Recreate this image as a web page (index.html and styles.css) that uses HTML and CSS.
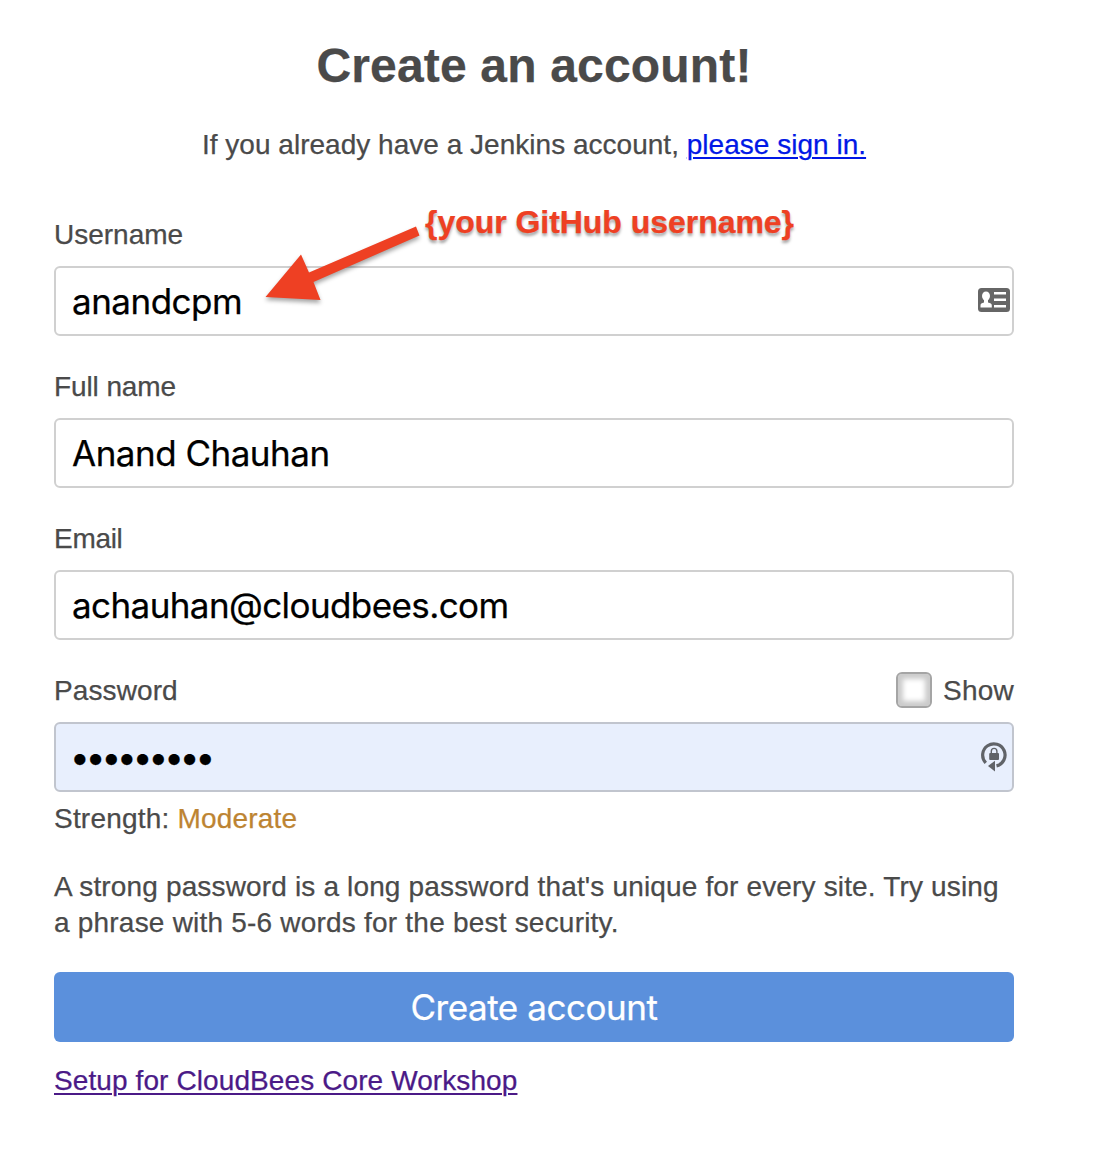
FILE: index.html
```html
<!DOCTYPE html>
<html lang="en">
<head>
<meta charset="utf-8">
<title>Create an account</title>
<link rel="stylesheet" href="styles.css">
</head>
<body>
<main class="signup">
  <h1 class="title">Create an account!</h1>
  <p class="intro">If you already have a Jenkins account, <a class="link" href="#">please sign in.</a></p>

  <div class="field">
    <div class="label"><span>Username</span></div>
    <div class="input"><span>anandcpm</span>
      <svg class="card-icon" width="32" height="24" viewBox="0 0 32 24"><rect width="32" height="24" rx="3.500" fill="#666"/><g fill="#fff"><ellipse cx="8" cy="8" rx="4" ry="4.500"/><path d="M6 11h4v3.500c2.500.5 3.800 1 3.800 3v2H2.500v-2c0-2 1.200-2.500 3.500-3z"/><path d="M16 4h12v2.500H16zM16 10.500h12V13H16zM16 17h12v2.500H16z"/></g></svg>
    </div>
  </div>
  <div class="field">
    <div class="label"><span class="full-name">Full name</span></div>
    <div class="input"><span>Anand Chauhan</span></div>
  </div>
  <div class="field">
    <div class="label"><span class="email-label">Email</span></div>
    <div class="input"><span class="email-value">achauhan@cloudbees.com</span></div>
  </div>
  <div class="field password">
    <div class="label"><span class="password-label">Password</span><div class="show"><i class="checkbox"></i><span class="show-label">Show</span></div></div>
    <div class="input filled"><span class="dots">•••••••••</span>
      <svg class="lock-icon" width="28" height="30" viewBox="0 0 28 30"><path d="M5.800 20.800A11.200 11.200 0 1 1 16.500 23.900" fill="none" stroke="#606368" stroke-width="3.200"/><path d="M8 24l7-5.300v10.800z" fill="#606368"/><rect x="9.200" y="11" width="9.800" height="7" rx="1" fill="#606368"/><path d="M11.300 11.500V9.200a2.800 2.800 0 0 1 5.600 0v2.300" fill="none" stroke="#606368" stroke-width="1.400"/></svg>
    </div>
  </div>
  <p class="strength">Strength: <b class="moderate">Moderate</b></p>
  <p class="hint"><span class="hint-first">A strong password is a long password that's unique for every site. Try using</span><br><span>a phrase with 5-6 words for the best security.</span></p>
  <div class="button">Create account</div>
  <p class="setup"><a class="visited" href="#">Setup for CloudBees Core Workshop</a></p>
</main>
<svg class="arrow" width="180" height="100" viewBox="250 210 180 100"><path d="M265.500 297L301 254.500 309 272.500 416 226.500 419.500 235.500 313.500 282 320.500 300z" fill="#ee4023"/></svg>
<span class="note">{your GitHub username}</span>
</body>
</html>
```
FILE: styles.css
```css
* { box-sizing: border-box; }
body {
  margin: 0;
  min-height: 1166px;
  position: relative;
  background: #fff;
  color: #4a4a4a;
  font: 28px/36px "Liberation Sans", Arial, sans-serif;
  -webkit-text-stroke: .25px currentColor;
}
p, h1 { margin: 0; white-space: nowrap; }
.signup { width: 960px; margin-left: 54px; padding-top: 36px; }
.title { text-align: center; font-size: 48px; line-height: 60px; letter-spacing: .17px; }
.intro { margin-top: 31px; text-align: center; letter-spacing: .02px; }
.link { color: #0018e6; }
.link, .visited { text-decoration-thickness: 2px; text-underline-offset: 3px; }
.visited { color: #4b1a87; }
.intro + .field { margin-top: 53px; }
.field { margin-bottom: 32px; }
.label { height: 36px; display: flex; justify-content: space-between; align-items: center; margin-bottom: 14px; }
.label span { padding-top: 2px; }
.full-name { letter-spacing: -.1px; }
.email-label { letter-spacing: -.3px; }
.password-label { letter-spacing: .1px; }
.show-label { letter-spacing: .25px; }
.input {
  height: 70px;
  border: 2px solid #d0d0d0;
  border-radius: 6px;
  padding: 0 2px 0 16px;
  display: flex;
  align-items: center;
  justify-content: space-between;
  background: #fff;
  color: #000;
  font: 35px/66px Inter, sans-serif;
  letter-spacing: -.5px;
}
.email-value { letter-spacing: -.59px; }
.card-icon { margin-bottom: 2px; }
.filled { background: #e8effd; border-color: #c1c5ce; padding-right: 4px; }
.dots { letter-spacing: -4px; margin-left: -2px; }
.lock-icon { margin-bottom: 1px; }
.show { display: flex; align-items: center; gap: 11px; }
.checkbox {
  width: 36px;
  height: 36px;
  border: 2px solid #a5a5a5;
  border-radius: 6px;
  background: #fff;
  box-shadow: inset 0 0 5px 5px #cbcbcb;
}
.password { margin-bottom: 9px; }
.strength { letter-spacing: .2px; }
.moderate { color: #bd8432; font-weight: 400; }
.hint { margin-top: 32px; letter-spacing: .21px; }
.hint-first { letter-spacing: .155px; }
.button {
  height: 70px;
  margin: 31px 0 21px;
  border-radius: 6px;
  background: #5b90dc;
  color: #fff;
  text-align: center;
  font: 35px/70px Inter, sans-serif;
  letter-spacing: -.45px;
}
.setup { letter-spacing: .1px; }
.arrow { position: absolute; left: 250px; top: 210px; filter: drop-shadow(0 3px 2px rgba(0,0,0,.35)); }
.note {
  position: absolute;
  left: 425px;
  top: 204px;
  color: #ee4023;
  font-weight: 700;
  font-size: 32px;
  letter-spacing: -.04px;
  text-shadow: 0 3px 3px rgba(0,0,0,.35);
  white-space: nowrap;
}
```
